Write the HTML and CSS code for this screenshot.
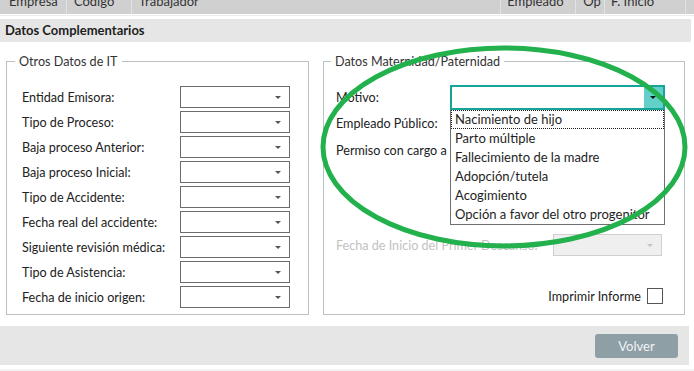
FILE: index.html
```html
<!DOCTYPE html>
<html lang="es">
<head>
<meta charset="utf-8">
<title>Datos Complementarios</title>
<link rel="stylesheet" href="styles.css">
</head>
<body>
<div class="page">
  <div class="grid-head">
    <div class="col c1">Empresa</div>
    <div class="col c2">Código</div>
    <div class="col c3">Trabajador</div>
    <div class="col c4">Empleado</div>
    <div class="col c5">Op</div>
    <div class="col c6">F. Inicio</div>
    <div class="col c7"></div>
  </div>
  <div class="head-sep"></div>
  <div class="section-title">Datos Complementarios</div>

  <div class="content">
    <fieldset class="box box-left">
      <legend>Otros Datos de IT</legend>
      <div class="form-rows">
        <div class="row"><span class="label">Entidad Emisora:</span><div class="select"><span class="arrow"></span></div></div>
        <div class="row"><span class="label">Tipo de Proceso:</span><div class="select"><span class="arrow"></span></div></div>
        <div class="row"><span class="label">Baja proceso Anterior:</span><div class="select"><span class="arrow"></span></div></div>
        <div class="row"><span class="label">Baja proceso Inicial:</span><div class="select"><span class="arrow"></span></div></div>
        <div class="row"><span class="label">Tipo de Accidente:</span><div class="select"><span class="arrow"></span></div></div>
        <div class="row"><span class="label">Fecha real del accidente:</span><div class="select"><span class="arrow"></span></div></div>
        <div class="row"><span class="label">Siguiente revisión médica:</span><div class="select"><span class="arrow"></span></div></div>
        <div class="row"><span class="label">Tipo de Asistencia:</span><div class="select"><span class="arrow"></span></div></div>
        <div class="row"><span class="label">Fecha de inicio origen:</span><div class="select"><span class="arrow"></span></div></div>
      </div>
    </fieldset>

    <fieldset class="box box-right">
      <legend>Datos Maternidad/Paternidad</legend>
      <div class="rrow r-motivo">
        <span class="rlabel">Motivo:</span>
        <div class="select-wrap">
          <div class="select select-open"><span class="arrow-box"><span class="arrow dark"></span></span></div>
          <ul class="dropdown">
            <li class="focused">Nacimiento de hijo</li>
            <li>Parto múltiple</li>
            <li>Fallecimiento de la madre</li>
            <li>Adopción/tutela</li>
            <li>Acogimiento</li>
            <li>Opción a favor del otro progenitor</li>
          </ul>
        </div>
      </div>
      <div class="rrow r-empleado"><span class="rlabel">Empleado Público:</span></div>
      <div class="rrow r-permiso"><span class="rlabel">Permiso con cargo a</span></div>
      <div class="rrow r-fecha">
        <span class="rlabel disabled">Fecha de Inicio del Primer Descanso:</span>
        <div class="select select-disabled"><span class="arrow light"></span></div>
      </div>
      <div class="rrow r-imprimir">
        <span class="rlabel">Imprimir Informe</span>
        <span class="checkbox"></span>
      </div>
    </fieldset>
  </div>

  <div class="footer">
    <button class="btn">Volver</button>
  </div>
  <div class="bottom-strip"></div>

  <svg class="annotation" width="694" height="380" viewBox="0 0 694 380" aria-hidden="true">
    <ellipse cx="504" cy="156" rx="181" ry="99" fill="none" stroke="#22b14c" stroke-width="5"/>
  </svg>
</div>
</body>
</html>
```

FILE: styles.css
```css
* { box-sizing: border-box; }

html, body {
  margin: 0;
  padding: 0;
  background: #ffffff;
}

body {
  font-family: Lato, "Noto Sans", sans-serif;
  font-size: 12.6px;
  color: #222;
  width: 694px;
  height: 371px;
  overflow: hidden;
}

.page {
  position: relative;
  margin-top: -9px;
}

.grid-head {
  display: flex;
  height: 23px;
  background: #d0d0d0;
  color: #333;
  font-size: 13px;
}

.col {
  line-height: 21px;
  padding-left: 8px;
  border-right: 1px solid #e2e2e2;
  white-space: nowrap;
}
.c1 { width: 67px; padding-left: 9px; }
.c2 { width: 65px; padding-left: 7px; }
.c3 { width: 370px; padding-left: 7px; }
.c4 { width: 75px; padding-left: 6px; }
.c5 { width: 29px; padding-left: 7px; }
.c6 { width: 81px; padding-left: 6px; }
.c7 { flex: 1; border-right: none; }

.head-sep {
  height: 2px;
  border-top: 1px solid #fff;
  background: #ececec;
}

.section-title {
  margin-top: 3px;
  width: 691px;
  height: 23px;
  line-height: 23px;
  background: #e6e6e6;
  font-weight: 700;
  font-size: 13px;
  padding-left: 5px;
  color: #1e1e1e;
}

.content {
  display: flex;
  align-items: flex-start;
  margin-top: 11px;
  padding-left: 6px;
  gap: 14px;
}

.box {
  margin: 0;
  border: 1px solid #b9c1c5;
  min-width: 0;
  height: 262px;
}

.box legend {
  padding: 0 4px;
  line-height: 17px;
  color: #333;
}

.box-left {
  width: 303px;
  padding: 16px 18px 6px 15px;
}
.box-left legend { margin-left: -7px; }

.form-rows {
  display: flex;
  flex-direction: column;
  gap: 3px;
}

.row {
  display: flex;
  align-items: center;
  height: 22px;
}

.label {
  flex: 1;
  white-space: nowrap;
}

.select {
  position: relative;
  width: 110px;
  height: 22px;
  border: 1px solid #6b6b6b;
  background: #fff;
}

.arrow {
  position: absolute;
  right: 8px;
  top: 9px;
  width: 0;
  height: 0;
  border-left: 3px solid transparent;
  border-right: 3px solid transparent;
  border-top: 3px solid #555;
}
.arrow.light { border-top-color: #c4c4c4; }

.box-right {
  width: 362px;
  padding: 15px 18px 8px 12px;
}
.box-right legend { margin-left: -5px; }

.rrow {
  display: flex;
  align-items: center;
}

.rlabel { white-space: nowrap; }
.rlabel.disabled { color: #c2c2c2; }

.r-motivo { height: 25px; }
.r-motivo .rlabel { width: 114px; }
.r-empleado { height: 24px; margin-top: 1px; }
.r-permiso { height: 24px; margin-top: 3px; }
.r-fecha { height: 22px; margin-top: 72px; }
.r-fecha .select { margin-left: auto; margin-right: 4px; width: 109px; }
.r-imprimir { height: 20px; margin-top: 30px; justify-content: flex-end; padding-right: 3px; gap: 6px; }

.select-wrap {
  position: relative;
}

.select-open {
  width: 215px;
  height: 25px;
  border: 2px solid #16a398;
}

.arrow-box {
  position: absolute;
  right: 0;
  top: 0;
  bottom: 0;
  width: 19px;
  background: #62cfc9;
}
.arrow-box .arrow { right: 7px; top: 9px; }
.arrow.dark { border-top-color: #111; }

.dropdown {
  position: absolute;
  z-index: 2;
  left: 0;
  top: 100%;
  width: 215px;
  margin: 0;
  padding: 0;
  list-style: none;
  background: #fff;
  border: 1px solid #707070;
  border-top: none;
  font-size: 13px;
}

.dropdown li {
  height: 19px;
  line-height: 19px;
  padding-left: 4px;
  white-space: nowrap;
  overflow: hidden;
  color: #1e1e1e;
}

.dropdown li.focused {
  outline: 1px dotted #222;
  outline-offset: -1px;
}

.select-disabled {
  background: #efefef;
  border-color: #cfcfcf;
}

.checkbox {
  width: 16px;
  height: 16px;
  border: 1px solid #555;
  background: #fff;
}

.footer {
  margin-top: 11px;
  width: 689px;
  height: 39px;
  background: #e6e6e6;
  display: flex;
  align-items: center;
  justify-content: flex-end;
  padding-right: 11px;
}

.btn {
  width: 83px;
  height: 24px;
  border: none;
  border-radius: 3px;
  background: #8e9fa5;
  color: #f2f4f5;
  font-family: Lato, "Noto Sans", sans-serif;
  font-size: 13px;
  padding: 0;
}

.bottom-strip {
  margin-top: 4px;
  height: 10px;
  background: #f2f2f2;
}

.annotation {
  position: absolute;
  left: 0;
  top: 0;
  pointer-events: none;
  z-index: 5;
}
```
